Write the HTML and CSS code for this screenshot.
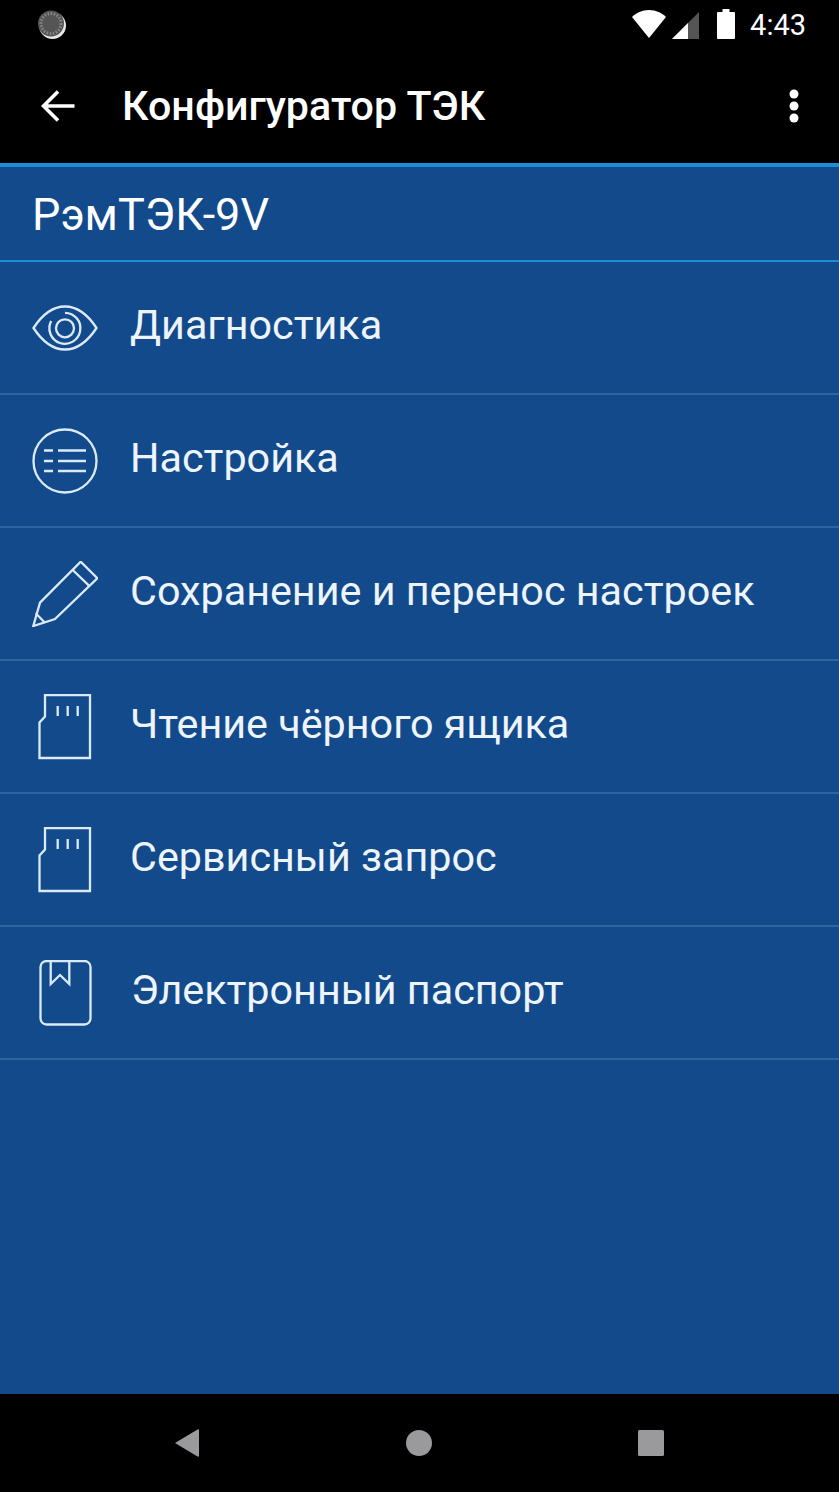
FILE: index.html
```html
<!DOCTYPE html>
<html lang="ru">
<head>
    <meta charset="UTF-8">
    <meta name="viewport" content="width=device-width, initial-scale=1.0">
    <title>Конфигуратор ТЭК</title>
    <link rel="stylesheet" href="styles.css">
</head>
<body>
    <div class="app">
        <div class="statusbar">
            <svg class="sync-icon" width="30" height="30" viewBox="0 0 30 30">
                <circle cx="15.5" cy="15.5" r="13.5" fill="#e8e8e8"/>
                <circle cx="14" cy="13.5" r="13" fill="#555"/>
                <circle cx="14" cy="13.5" r="10" fill="none" stroke="#8a8a8a" stroke-width="3" stroke-dasharray="1.4 1.7"/>
            </svg>
            <span class="status-spacer"></span>
            <svg class="wifi-icon" width="34" height="28" viewBox="0 0 34 28">
                <path d="M17 28 L0 7 C4 3 10 0 17 0 S30 3 34 7 Z" fill="#fff"/>
            </svg>
            <svg class="signal-icon" width="27" height="27" viewBox="0 0 27 27">
                <path d="M27 0 V27 H0 Z" fill="#555"/>
                <path d="M16 11 V27 H0 Z" fill="#fff"/>
            </svg>
            <svg class="battery-icon" width="18" height="30" viewBox="0 0 18 30">
                <path d="M5.5 0 H12.500 V3 H17 Q18 3 18 4 V29 Q18 30 17 30 H1 Q0 30 0 29 V4 Q0 3 1 3 H5.500 Z" fill="#fff"/>
            </svg>
            <span class="clock">4:43</span>
        </div>

        <div class="toolbar">
            <svg class="back-icon" width="34" height="32" viewBox="0 0 34 32">
                <path d="M33.500 16 H3 M17 1.500 L2.500 16 L17 30.500" fill="none" stroke="#fff" stroke-width="3.600"/>
            </svg>
            <h1 class="toolbar-title">Конфигуратор ТЭК</h1>
            <svg class="more-icon" width="10" height="34" viewBox="0 0 10 34">
                <circle cx="5" cy="5" r="4.500" fill="#fff"/>
                <circle cx="5" cy="17" r="4.500" fill="#fff"/>
                <circle cx="5" cy="29" r="4.500" fill="#fff"/>
            </svg>
        </div>

        <div class="content">
            <div class="device-name">РэмТЭК-9V</div>

            <ul class="menu">
                <li class="menu-item">
                    <svg class="menu-icon" viewBox="0 0 66 66">
                        <path d="M1.500 33 C12 17 22 11.500 33 11.500 S54 17 64.500 33 C54 49 44 54.500 33 54.500 S12 49 1.500 33 Z"/>
                        <circle cx="33" cy="33.300" r="9"/>
                        <path d="M33 17.800 A15.500 15.500 0 1 1 19.200 26"/>
                    </svg>
                    <span class="menu-label">Диагностика</span>
                </li>
                <li class="menu-item">
                    <svg class="menu-icon" viewBox="0 0 66 66">
                        <circle cx="33" cy="33" r="31.500"/>
                        <path d="M12 22.500 H21 M26 22.500 H54 M12 33 H21 M26 33 H54 M12 43 H21 M26 43 H54"/>
                    </svg>
                    <span class="menu-label">Настройка</span>
                </li>
                <li class="menu-item">
                    <svg class="menu-icon" viewBox="0 0 66 66">
                        <path d="M1.300 65 L8 41.700 L48.700 .700 L65.300 17.300 L23 58 Z"/>
                        <path d="M40.700 9 L57 24.700 M3.700 52.300 L13 61.700"/>
                    </svg>
                    <span class="menu-label">Сохранение и перенос настроек</span>
                </li>
                <li class="menu-item">
                    <svg class="menu-icon" viewBox="0 0 66 66">
                        <path d="M13 1 H58 V64 H7.500 V28.500 L13 22.500 Z"/>
                        <path d="M25.700 12 V22 M35.700 12 V22 M45.700 12 V22"/>
                    </svg>
                    <span class="menu-label">Чтение чёрного ящика</span>
                </li>
                <li class="menu-item">
                    <svg class="menu-icon" viewBox="0 0 66 66">
                        <path d="M13 1 H58 V64 H7.500 V28.500 L13 22.500 Z"/>
                        <path d="M25.700 12 V22 M35.700 12 V22 M45.700 12 V22"/>
                    </svg>
                    <span class="menu-label">Сервисный запрос</span>
                </li>
                <li class="menu-item">
                    <svg class="menu-icon" viewBox="0 0 66 66">
                        <rect x="8.500" y="1" width="50" height="63.500" rx="6"/>
                        <path d="M18.700 1 V24 L28 15 L37.300 24 V1"/>
                    </svg>
                    <span class="menu-label menu-label-shift">Электронный паспорт</span>
                </li>
            </ul>
        </div>

        <div class="navbar">
            <svg width="24" height="28" viewBox="0 0 24 28">
                <path d="M24 1 V27 Q24 28 22.500 27.500 L0 14 L22.500 .500 Q24 0 24 1 Z" fill="#9a9a9c"/>
            </svg>
            <svg width="26" height="26" viewBox="0 0 26 26">
                <circle cx="13" cy="13" r="13" fill="#9a9a9c"/>
            </svg>
            <svg width="26" height="26" viewBox="0 0 26 26">
                <rect width="26" height="26" rx="1.500" fill="#9a9a9c"/>
            </svg>
        </div>
    </div>
</body>
</html>
```

FILE: styles.css
```css
* {
    box-sizing: border-box;
}
body {
    margin: 0;
    background: #000;
    font-family: Roboto, "Noto Sans", sans-serif;
    color: #fff;
}
.app {
    display: flex;
    flex-direction: column;
    height: 1492px;
}
.statusbar {
    display: flex;
    align-items: center;
    height: 50px;
    padding: 0 33px 0 37px;
}
.status-spacer {
    flex: 1;
}
.wifi-icon {
    margin: 0 6px 2px 0;
}
.signal-icon {
    margin: 0 18px 0 0;
}
.battery-icon {
    margin: 0 15px 2px 0;
}
.clock {
    font-size: 29px;
    line-height: 50px;
}
.toolbar {
    display: flex;
    align-items: center;
    height: 113px;
    padding: 0 40px 1px 41px;
}
.toolbar-title {
    flex: 1;
    margin: 0 0 0 47px;
    font-size: 41.200px;
    font-weight: 500;
}
.content {
    flex: 1;
    background: #124a8c;
    border-top: 4px solid #1a8fd6;
}
.device-name {
    height: 95px;
    padding-left: 32px;
    font-size: 45px;
    line-height: 96px;
    border-bottom: 2px solid #1a8fd6;
}
.menu {
    list-style: none;
    margin: 0;
    padding: 0;
}
.menu-item {
    display: flex;
    align-items: center;
    height: 133px;
    padding-left: 32px;
    border-bottom: 2px solid #2f659f;
}
.menu-icon {
    flex: none;
    width: 66px;
    height: 66px;
    fill: none;
    stroke: #dbeaf8;
    stroke-width: 2.300;
}
.menu-label {
    margin: 0 0 5px 32px;
    font-size: 41.300px;
    color: #eef4fb;
}
.menu-label-shift {
    margin-left: 33px;
}
.navbar {
    display: flex;
    align-items: center;
    height: 98px;
    padding: 0 175px;
    justify-content: space-between;
}
```
